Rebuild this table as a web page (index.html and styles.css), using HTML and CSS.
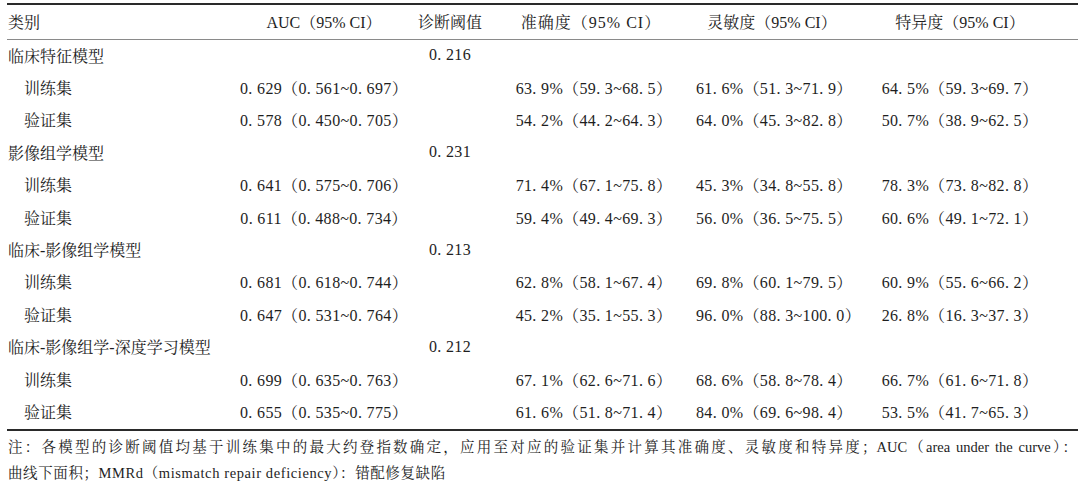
FILE: index.html
```html
<!DOCTYPE html>
<html lang="zh-CN">
<head>
<meta charset="utf-8">
<title>模型诊断效能</title>
<link rel="stylesheet" href="styles.css">
</head>
<body>
<div class="page">
  <table class="data">
    <colgroup>
      <col class="c1"><col class="c2"><col class="c3"><col class="c4"><col class="c5"><col class="c6">
    </colgroup>
    <thead>
      <tr>
        <th class="left">类别</th>
        <th>AUC（95% CI）</th>
        <th>诊断阈值</th>
        <th class="acc-h">准确度（95% CI）</th>
        <th>灵敏度（95% CI）</th>
        <th class="last">特异度（95% CI）</th>
      </tr>
    </thead>
    <tbody>
      <tr class="group"><td class="left">临床特征模型</td><td></td><td>0. 216</td><td></td><td></td><td class="last"></td></tr>
      <tr><td class="left sub">训练集</td><td>0. 629（0. 561~0. 697）</td><td></td><td>63. 9%（59. 3~68. 5）</td><td>61. 6%（51. 3~71. 9）</td><td class="last">64. 5%（59. 3~69. 7）</td></tr>
      <tr><td class="left sub">验证集</td><td>0. 578（0. 450~0. 705）</td><td></td><td>54. 2%（44. 2~64. 3）</td><td>64. 0%（45. 3~82. 8）</td><td class="last">50. 7%（38. 9~62. 5）</td></tr>
      <tr class="group"><td class="left">影像组学模型</td><td></td><td>0. 231</td><td></td><td></td><td class="last"></td></tr>
      <tr><td class="left sub">训练集</td><td>0. 641（0. 575~0. 706）</td><td></td><td>71. 4%（67. 1~75. 8）</td><td>45. 3%（34. 8~55. 8）</td><td class="last">78. 3%（73. 8~82. 8）</td></tr>
      <tr><td class="left sub">验证集</td><td>0. 611（0. 488~0. 734）</td><td></td><td>59. 4%（49. 4~69. 3）</td><td>56. 0%（36. 5~75. 5）</td><td class="last">60. 6%（49. 1~72. 1）</td></tr>
      <tr class="group"><td class="left">临床-影像组学模型</td><td></td><td>0. 213</td><td></td><td></td><td class="last"></td></tr>
      <tr><td class="left sub">训练集</td><td>0. 681（0. 618~0. 744）</td><td></td><td>62. 8%（58. 1~67. 4）</td><td>69. 8%（60. 1~79. 5）</td><td class="last">60. 9%（55. 6~66. 2）</td></tr>
      <tr><td class="left sub">验证集</td><td>0. 647（0. 531~0. 764）</td><td></td><td>45. 2%（35. 1~55. 3）</td><td>96. 0%（88. 3~100. 0）</td><td class="last">26. 8%（16. 3~37. 3）</td></tr>
      <tr class="group"><td class="left">临床-影像组学-深度学习模型</td><td></td><td>0. 212</td><td></td><td></td><td class="last"></td></tr>
      <tr><td class="left sub">训练集</td><td>0. 699（0. 635~0. 763）</td><td></td><td>67. 1%（62. 6~71. 6）</td><td>68. 6%（58. 8~78. 4）</td><td class="last">66. 7%（61. 6~71. 8）</td></tr>
      <tr><td class="left sub">验证集</td><td>0. 655（0. 535~0. 775）</td><td></td><td>61. 6%（51. 8~71. 4）</td><td>84. 0%（69. 6~98. 4）</td><td class="last">53. 5%（41. 7~65. 3）</td></tr>
    </tbody>
  </table>
  <div class="note">
    <div class="note-line justify">注：各模型的诊断阈值均基于训练集中的最大约登指数确定，应用至对应的验证集并计算其准确度、灵敏度和特异度；AUC（area under the curve）：</div>
    <div class="note-line">曲线下面积；MMRd（mismatch repair deficiency）：错配修复缺陷</div>
  </div>
</div>
</body>
</html>
```

FILE: styles.css
```css
html, body {
  margin: 0;
  padding: 0;
  background: #ffffff;
}

body {
  font-family: "Liberation Serif", "Noto Serif CJK SC", "Noto Sans CJK SC", serif;
  color: #1e1e1e;
}

.page {
  padding: 3px 2px 0 7px;
  width: 1071px;
}

.data {
  width: 1071px;
  border-collapse: collapse;
  table-layout: fixed;
  border-top: 2px solid #2a2a2a;
  border-bottom: 2px solid #2a2a2a;
  font-size: 16px;
}

.c1 { width: 233px; }
.c2 { width: 168px; }
.c3 { width: 84px; }
.c4 { width: 204px; }
.c5 { width: 152px; }
.c6 { width: 230px; }

.data th,
.data td {
  padding: 0;
  text-align: center;
  white-space: nowrap;
  font-weight: normal;
}

.data thead th {
  height: 33px;
  padding-bottom: 1px;
  border-bottom: 1px solid #8a8a8a;
  vertical-align: middle;
}

.data tbody td {
  height: 30.4px;
  padding-bottom: 2px;
  vertical-align: middle;
  letter-spacing: 0.35px;
}

.data tbody td.left {
  letter-spacing: 0;
}

.data .left {
  text-align: left;
  padding-left: 1px;
}

.data .sub {
  padding-left: 17px;
}

.data .acc-h {
  padding-right: 6px;
  letter-spacing: 1px;
}

.data .last {
  padding-right: 6px;
}

.note {
  width: 1069px;
  padding-left: 1px;
  padding-top: 3px;
  font-size: 14.5px;
  line-height: 26px;
}

.note-line {
  white-space: nowrap;
  letter-spacing: 0.6px;
}

.note-line.justify {
  white-space: normal;
  letter-spacing: 0;
  text-align: justify;
  text-align-last: justify;
}
```
